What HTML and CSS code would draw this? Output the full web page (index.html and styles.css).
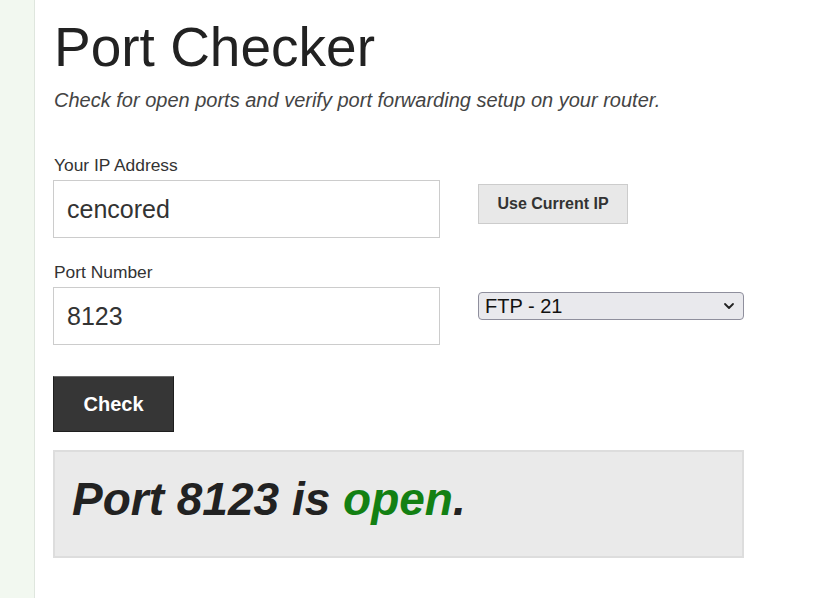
FILE: index.html
```html
<!DOCTYPE html>
<html lang="en">
<head>
<meta charset="utf-8">
<title>Port Checker</title>
<link rel="stylesheet" href="styles.css">
</head>
<body>
<div class="page">
  <aside class="sidebar"></aside>
  <main class="main">
    <h1 class="title">Port Checker</h1>
    <p class="subtitle">Check for open ports and verify port forwarding setup on your router.</p>

    <label class="label" for="ip">Your IP Address</label>
    <div class="row">
      <input class="field" id="ip" type="text" value="cencored">
      <button class="btn-light" type="button">Use Current IP</button>
    </div>

    <label class="label" for="port">Port Number</label>
    <div class="row">
      <input class="field" id="port" type="text" value="8123">
      <div class="select-wrap">
        <select class="select">
          <option>FTP - 21</option>
          <option>SSH - 22</option>
          <option>HTTP - 80</option>
        </select>
        <svg class="chevron" width="12" height="8" viewBox="0 0 12 8"><path d="M2 2 L6 6 L10 2" fill="none" stroke="#222" stroke-width="1.8" stroke-linecap="round" stroke-linejoin="round"/></svg>
      </div>
    </div>

    <button class="btn-dark" type="button">Check</button>

    <div class="result">Port 8123 is <span class="open">open</span>.</div>
  </main>
</div>
</body>
</html>
```

FILE: styles.css
```css
html, body {
  margin: 0;
  padding: 0;
  background: #fff;
}
body {
  font-family: "Liberation Sans", Arial, sans-serif;
  color: #222;
}
.page {
  display: flex;
  min-height: 100vh;
}
.sidebar {
  width: 34px;
  flex: none;
  background: #f2f8f0;
  border-right: 1px solid #dfe6de;
}
.main {
  flex: 1;
  padding-left: 18px;
}
.title {
  font-size: 55px;
  font-weight: normal;
  line-height: 64px;
  margin: 15px 0 0 1px;
  color: #222;
}
.subtitle {
  font-size: 20px;
  font-style: italic;
  color: #444;
  margin: 10px 0 0 1px;
  line-height: 23px;
}
.label {
  display: block;
  font-size: 17.4px;
  line-height: 20px;
  color: #333;
  margin: 43px 0 5px 1px;
}
.row {
  display: flex;
  align-items: flex-start;
  gap: 38px;
}
.row + .label {
  margin-top: 24px;
}
.field {
  box-sizing: border-box;
  width: 387px;
  height: 58px;
  border: 1px solid #ccc;
  padding: 0 13px;
  font-family: "Liberation Sans", Arial, sans-serif;
  font-size: 25px;
  color: #333;
  background: #fff;
  outline: none;
}
.btn-light {
  box-sizing: border-box;
  margin-top: 4px;
  width: 150px;
  height: 40px;
  background: #e8e8e8;
  border: 1px solid #ccc;
  font-family: "Liberation Sans", Arial, sans-serif;
  font-size: 16px;
  font-weight: bold;
  color: #333;
  padding: 0;
}
.select-wrap {
  position: relative;
  margin-top: 5px;
  width: 266px;
  height: 28px;
}
.select {
  appearance: none;
  -webkit-appearance: none;
  box-sizing: border-box;
  width: 266px;
  height: 28px;
  border: 1px solid #8f8f9d;
  border-radius: 4px;
  background: #e9e9ed;
  font-family: "Liberation Sans", Arial, sans-serif;
  font-size: 20px;
  color: #111;
  padding: 0 0 0 6px;
  line-height: 26px;
  outline: none;
}
.chevron {
  position: absolute;
  right: 9px;
  top: 10px;
  pointer-events: none;
}
.btn-dark {
  display: block;
  box-sizing: border-box;
  margin-top: 31px;
  width: 121px;
  height: 56px;
  background: #363636;
  border: 1px solid #1e1e1e;
  border-top-color: #6a6a6a;
  color: #fff;
  font-family: "Liberation Sans", Arial, sans-serif;
  font-size: 20px;
  font-weight: bold;
  padding: 0;
}
.result {
  box-sizing: border-box;
  margin-top: 18px;
  width: 691px;
  height: 108px;
  background: #eaeaea;
  border: 2px solid #dddddd;
  padding: 21px 0 0 17px;
  font-size: 46px;
  font-weight: bold;
  font-style: italic;
  line-height: 53px;
  color: #222;
}
.open {
  color: #138013;
}
```
